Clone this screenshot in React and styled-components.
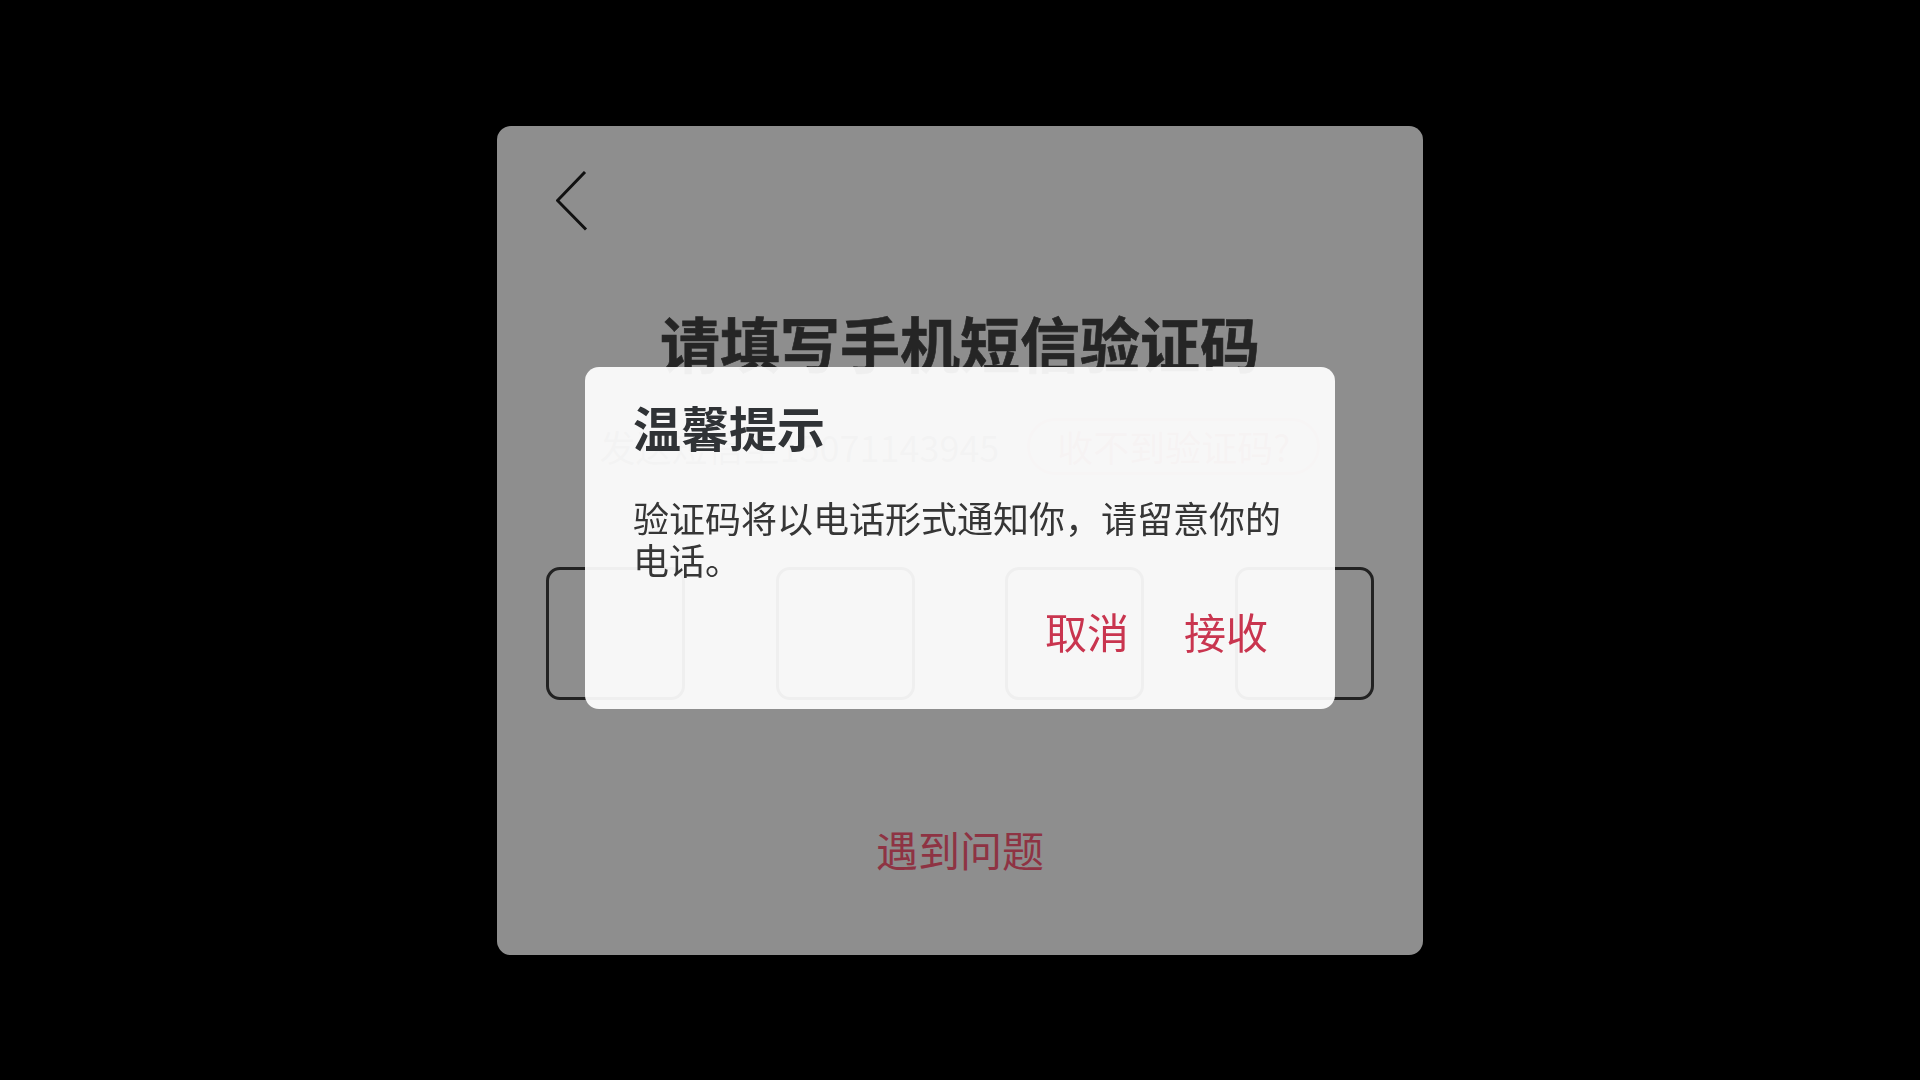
import React from 'react';
import styled, { createGlobalStyle } from 'styled-components';

const GlobalStyle = createGlobalStyle`
  html, body {
    margin: 0;
    padding: 0;
    background: #000;
  }
  body {
    font-family: 'Noto Sans CJK SC', 'Noto Sans', sans-serif;
  }
`;

const Screen = styled.div`
  width: 1920px;
  height: 1080px;
  display: flex;
  align-items: center;
  justify-content: center;
  background: #000;
`;

const Page = styled.div`
  width: 926px;
  height: 829px;
  box-sizing: border-box;
  padding: 45px 49px 0;
  background: #fff;
  border-radius: 14px;
  display: flex;
  flex-direction: column;
`;

const BackButton = styled.button`
  align-self: flex-start;
  margin-left: 10px;
  padding: 0;
  border: none;
  background: transparent;
  width: 32px;
  height: 60px;
  cursor: pointer;

  svg {
    display: block;
  }
`;

const Title = styled.h1`
  margin: 81px 0 0;
  font-size: 60px;
  line-height: 1;
  font-weight: 700;
  color: #444;
  text-align: center;
  -webkit-text-stroke: 0.6px #444;
`;

const SentRow = styled.div`
  margin-top: 46px;
  display: flex;
  align-items: center;
  justify-content: center;
  gap: 28px;
`;

const SentText = styled.span`
  font-size: 36px;
  line-height: 1;
  color: #999;
`;

const ResendPill = styled.button`
  height: 57px;
  box-sizing: border-box;
  padding: 0 27px;
  border: 3px solid #f3c2ca;
  border-radius: 29px;
  background: transparent;
  font-family: inherit;
  font-size: 36px;
  line-height: 1;
  color: #e0909c;
`;

const CodeRow = styled.div`
  margin-top: 92px;
  display: flex;
  justify-content: space-between;
`;

const CodeBox = styled.div`
  width: 139px;
  height: 133px;
  box-sizing: border-box;
  border: 3px solid #3d3d3d;
  border-radius: 14px;
`;

const HelpLink = styled.a`
  margin-top: 128px;
  align-self: center;
  font-size: 42px;
  line-height: 1;
  color: #ff5d78;
  text-decoration: none;
`;

const Overlay = styled.div`
  position: fixed;
  inset: 0;
  background: rgba(0, 0, 0, 0.443);
`;

const Dialog = styled.div`
  position: fixed;
  left: 50%;
  top: 367px;
  transform: translateX(-50%);
  width: 750px;
  box-sizing: border-box;
  padding: 35px 48px 57px;
  background: rgba(255, 255, 255, 0.93);
  border-radius: 14px;
`;

const DialogTitle = styled.h2`
  margin: 0;
  font-size: 48px;
  line-height: 1;
  font-weight: 700;
  color: #303336;
`;

const DialogBody = styled.p`
  margin: 46px 0 0;
  font-size: 36px;
  line-height: 42px;
  color: #363636;
`;

const Actions = styled.div`
  margin-top: 30px;
  padding-right: 19px;
  display: flex;
  justify-content: flex-end;
  gap: 55px;
`;

const ActionButton = styled.button`
  padding: 0;
  border: none;
  background: transparent;
  font-family: inherit;
  font-size: 42px;
  line-height: 1;
  color: #c9354f;
  cursor: pointer;
`;

const ChevronLeft = () => (
  <svg width="32" height="60" viewBox="0 0 32 60">
    <path d="M29 1 L1.5 29.5 L30 58.5" fill="none" stroke="#1f1f1f" strokeWidth="3" />
  </svg>
);

export default function App() {
  return (
    <>
      <GlobalStyle />
      <Screen>
        <Page>
          <BackButton aria-label="返回">
            <ChevronLeft />
          </BackButton>
          <Title>请填写手机短信验证码</Title>
          <SentRow>
            <SentText>发送短信至15071143945</SentText>
            <ResendPill>收不到验证码?</ResendPill>
          </SentRow>
          <CodeRow>
            {[0, 1, 2, 3].map((i) => (
              <CodeBox key={i} />
            ))}
          </CodeRow>
          <HelpLink>遇到问题</HelpLink>
        </Page>
      </Screen>
      <Overlay />
      <Dialog>
        <DialogTitle>温馨提示</DialogTitle>
        <DialogBody>验证码将以电话形式通知你，请留意你的电话。</DialogBody>
        <Actions>
          <ActionButton>取消</ActionButton>
          <ActionButton>接收</ActionButton>
        </Actions>
      </Dialog>
    </>
  );
}
